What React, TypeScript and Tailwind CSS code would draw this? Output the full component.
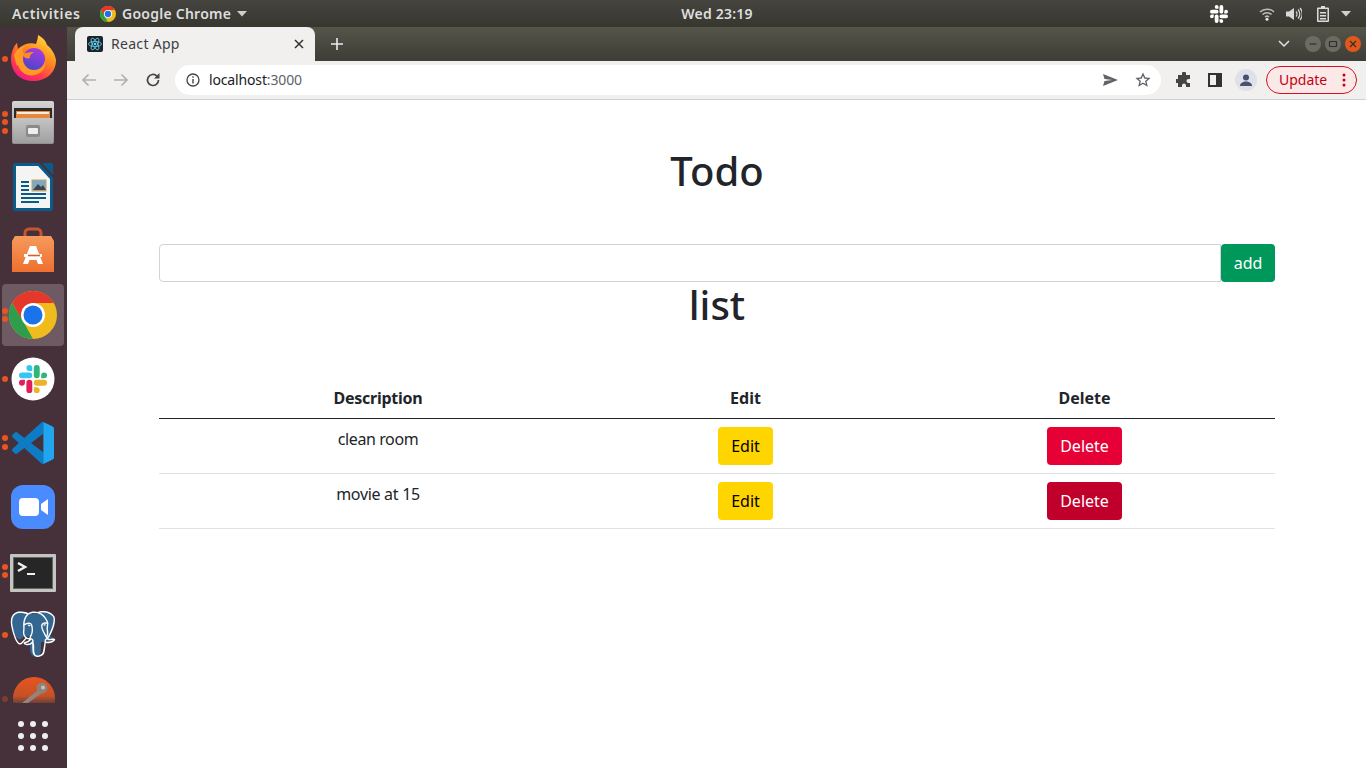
import React from "react";
import { SiPostgresql } from "react-icons/si";

const font = { fontFamily: '"Noto Sans", "Open Sans", sans-serif' };

function Slot({ dots = [], dim = false, active = false, children }: { dots?: number[]; dim?: boolean; active?: boolean; children: React.ReactNode }) {
  return (
    <div className="relative h-[64px] w-[67px] shrink-0">
      {active && <div className="absolute left-[2px] top-[1px] h-[62px] w-[62px] rounded-[4px] bg-[#6d5a62]" />}
      {dots.map((y) => (
        <span key={y} className={`absolute left-[2px] h-[6px] w-[6px] rounded-full ${dim ? "bg-[#7c3f2c]" : "bg-[#e95420]"}`} style={{ top: y - 3 }} />
      ))}
      <svg className="absolute left-0 top-0" width="67" height="64" viewBox="0 0 67 64">
        {children}
      </svg>
    </div>
  );
}

function Firefox() {
  return (
    <>
      <defs>
        <linearGradient id="ff1" x1="0.8" y1="0" x2="0.2" y2="1">
          <stop offset="0" stopColor="#ffe13a" />
          <stop offset="0.4" stopColor="#ff8a1f" />
          <stop offset="0.75" stopColor="#ff3750" />
          <stop offset="1" stopColor="#f0148c" />
        </linearGradient>
        <linearGradient id="ff2" x1="0.7" y1="0" x2="0.3" y2="1">
          <stop offset="0" stopColor="#a83be0" />
          <stop offset="1" stopColor="#4a46c8" />
        </linearGradient>
      </defs>
      <path d="M38 8c6 3 8 7 9 10 3 2 8 8 9 15 0 13-10 21-23 21S11 45 11 32c0-5 2-10 3-12 1-2 3-4 3-4l1 6c2-2 5-4 8-5 3-1 7-1 10 0 1-3 2-6 2-9z" fill="url(#ff1)" />
      <path d="M14 28c2-5 7-9 12-10-3 3-4 6-3 8 4-3 14-3 20 3 5 6 2 17-8 19-8 2-15-3-17-10-1 2-2 0-4-10z" fill="#ff9a22" />
      <circle cx="34" cy="32" r="11" fill="url(#ff2)" />
      <path d="M23 28c3-3 8-3 11-3-3 2-5 4-4 6-3 1-6 0-7-3z" fill="#ff8a1f" />
    </>
  );
}

function Files() {
  return (
    <>
      <defs>
        <linearGradient id="fl" x1="0" y1="0" x2="0" y2="1">
          <stop offset="0" stopColor="#d6d6d6" />
          <stop offset="1" stopColor="#8f8f8f" />
        </linearGradient>
        <linearGradient id="fl2" x1="0" y1="0" x2="0" y2="1">
          <stop offset="0" stopColor="#c4c4c4" />
          <stop offset="1" stopColor="#a0a0a0" />
        </linearGradient>
      </defs>
      <rect x="12" y="10" width="42" height="43" rx="2" fill="url(#fl)" />
      <rect x="14" y="17" width="38" height="11" fill="#2c2c2c" />
      <rect x="16" y="20" width="34" height="8" fill="#e8863a" />
      <rect x="17" y="21" width="32" height="2" fill="#f7ede0" />
      <rect x="13" y="27" width="40" height="25" fill="url(#fl2)" />
      <rect x="26" y="34" width="14" height="12" rx="2" fill="#8a8a8a" />
      <rect x="28" y="37" width="10" height="6" rx="1" fill="#eeeeee" />
    </>
  );
}

function Writer() {
  return (
    <>
      <path d="M13 10a2 2 0 0 1 2-2h24l14 15v31a2 2 0 0 1-2 2H15a2 2 0 0 1-2-2z" fill="#0b5a8c" />
      <path d="M42 8h9a2 2 0 0 1 2 2v10z" fill="#0b5a8c" />
      <path d="M16 11h22l12 13v29H16z" fill="#f4f4f2" />
      <rect x="32" y="25" width="14" height="11" fill="#7ba7c9" stroke="#c9a35a" />
      <path d="M33 35l5-6 3 3 2-2 3 5z" fill="#444" />
      <path d="M21 26h8v2h-8zM21 30h8v2h-8zM21 34h8v2h-8zM21 38h25v2H21zM21 42h25v2H21zM21 46h18v2H21z" fill="#0b5a8c" />
    </>
  );
}

function Store() {
  return (
    <>
      <defs>
        <linearGradient id="st" x1="0" y1="0" x2="0" y2="1">
          <stop offset="0" stopColor="#f59a5d" />
          <stop offset="1" stopColor="#ef6f2e" />
        </linearGradient>
      </defs>
      <path d="M25 20v-6a4 4 0 0 1 4-4h8a4 4 0 0 1 4 4v6" fill="none" stroke="#c9562a" strokeWidth="3" />
      <path d="M15 17h36l3 5v31H12V22z" fill="url(#st)" />
      <path d="M30 27h6l7 18h-5l-1.500-4h-7L28 45h-5z" fill="#fff" />
      <rect x="24" y="35" width="18" height="3" fill="#fff" />
      <rect x="28" y="35.700" width="12" height="1.600" fill="#e25c2a" />
    </>
  );
}

function ChromeIcon({ cx, cy, r }: { cx: number; cy: number; r: number }) {
  const k = r / 24;
  const p = (x: number, y: number) => `${cx + x * k} ${cy + y * k}`;
  return (
    <>
      <circle cx={cx} cy={cy} r={r} fill="#f0bb1c" />
      <path d={`M${p(-20.8, -12)}A${r} ${r} 0 0 1 ${p(20.8, -12)}L${p(0, -12)}Z`} fill="#e5382b" />
      <path d={`M${p(-20.8, -12)}L${p(-10, 6)}L${p(0, 24)}A${r} ${r} 0 0 1 ${p(-20.8, -12)}Z`} fill="#2f9e4c" />
      <path d={`M${p(-20.8, -12)}L${p(0, -12)}L${p(-10, 6)}Z`} fill="#e5382b" />
      <circle cx={cx} cy={cy} r={12 * k} fill="#fff" />
      <circle cx={cx} cy={cy} r={9.5 * k} fill="#1a73e8" />
    </>
  );
}

function SlackMark({ x, y, s, mono }: { x: number; y: number; s: number; mono?: string }) {
  return (
    <g transform={`translate(${x} ${y}) scale(${s})`}>
      <path fill={mono || "#e01e5a"} d="M5.042 15.165a2.528 2.528 0 0 1-2.52 2.523A2.528 2.528 0 0 1 0 15.165a2.527 2.527 0 0 1 2.522-2.52h2.52v2.52zM6.313 15.165a2.527 2.527 0 0 1 2.521-2.52 2.527 2.527 0 0 1 2.521 2.52v6.313A2.528 2.528 0 0 1 8.834 24a2.528 2.528 0 0 1-2.521-2.522v-6.313z" />
      <path fill={mono || "#36c5f0"} d="M8.834 5.042a2.528 2.528 0 0 1-2.521-2.52A2.528 2.528 0 0 1 8.834 0a2.528 2.528 0 0 1 2.521 2.522v2.52H8.834zM8.834 6.313a2.528 2.528 0 0 1 2.521 2.521 2.528 2.528 0 0 1-2.521 2.521H2.522A2.528 2.528 0 0 1 0 8.834a2.528 2.528 0 0 1 2.522-2.521h6.312z" />
      <path fill={mono || "#2eb67d"} d="M18.956 8.834a2.528 2.528 0 0 1 2.522-2.521A2.528 2.528 0 0 1 24 8.834a2.528 2.528 0 0 1-2.522 2.521h-2.522V8.834zM17.688 8.834a2.528 2.528 0 0 1-2.523 2.521 2.527 2.527 0 0 1-2.52-2.521V2.522A2.527 2.527 0 0 1 15.165 0a2.528 2.528 0 0 1 2.523 2.522v6.312z" />
      <path fill={mono || "#ecb22e"} d="M15.165 18.956a2.528 2.528 0 0 1 2.523 2.522A2.528 2.528 0 0 1 15.165 24a2.527 2.527 0 0 1-2.52-2.522v-2.522h2.52zM15.165 17.688a2.527 2.527 0 0 1-2.52-2.523 2.526 2.526 0 0 1 2.52-2.52h6.313A2.527 2.527 0 0 1 24 15.165a2.528 2.528 0 0 1-2.522 2.523h-6.313z" />
    </g>
  );
}

function VSCode() {
  return (
    <g transform="translate(12 11) scale(1.75)">
      <path fill="#0e7cc4" d="M23.15 2.587L18.21.21a1.494 1.494 0 0 0-1.705.29l-9.46 8.63-4.12-3.128a.999.999 0 0 0-1.276.057L.327 7.261A1 1 0 0 0 .326 8.74L3.899 12 .326 15.26a1 1 0 0 0 .001 1.479L1.65 17.94a.999.999 0 0 0 1.276.057l4.12-3.128 9.46 8.63a1.492 1.492 0 0 0 1.704.29l4.942-2.377A1.5 1.5 0 0 0 24 20.06V3.939a1.5 1.5 0 0 0-.85-1.352zm-5.146 14.861L10.826 12l7.178-5.448v10.896z" />
      <path fill="#22a4ee" d="M18 .12l5.15 2.467A1.5 1.5 0 0 1 24 3.939V20.06a1.5 1.5 0 0 1-.85 1.353L18 23.88z" />
    </g>
  );
}

function ZoomIcon() {
  return (
    <>
      <rect x="11" y="10" width="44" height="44" rx="12" fill="#4a8cff" />
      <rect x="19" y="23" width="20" height="18" rx="4" fill="#fff" />
      <path d="M41 29l7-5v16l-7-5z" fill="#fff" />
    </>
  );
}

function Terminal() {
  return (
    <>
      <rect x="10" y="15" width="46" height="38" rx="1" fill="#c4c4c0" />
      <rect x="13" y="18" width="40" height="32" fill="#666" />
      <rect x="14" y="19" width="38" height="30" fill="#262626" />
      <path d="M18 24l7 4-7 4" fill="none" stroke="#f0f0f0" strokeWidth="2.500" />
      <rect x="27" y="34" width="8" height="2" fill="#f0f0f0" />
    </>
  );
}

function Postgres() {
  return (
    <>
      <path d="M20 9c-7 0-9 5-9 9 0 7 3 14 6 17 2 2 4 2 6-1l3-1c1 0 3 1 4 1v12c0 5 3 8 6 8s5-3 5-8V39c3 0 6 0 8-1 3-1 5-2 5-3-1-1-3-1-4-2 2-4 5-9 5-14 0-7-4-10-10-10-3 0-5 1-6 2-3-1-5-1-8 0-3-2-7-3-12-3z" fill="#336791" />
      <SiPostgresql x={10} y={8} size={46} color="#ffffff" />
    </>
  );
}

function Last() {
  return (
    <>
      <defs>
        <linearGradient id="ls" x1="0" y1="0" x2="0" y2="1">
          <stop offset="0" stopColor="#e95420" />
          <stop offset="0.45" stopColor="#c65126" />
          <stop offset="0.62" stopColor="#6a4038" />
        </linearGradient>
      </defs>
      <circle cx="34" cy="31" r="21" fill="url(#ls)" />
      <circle cx="42" cy="21" r="5.500" fill="#8f8078" />
      <circle cx="43" cy="20.500" r="2" fill="#c8beb8" />
      <path d="M38 23L22 36h6l14-10z" fill="#94847c" />
    </>
  );
}

function Sidebar() {
  return (
    <div className="flex h-[741px] w-[67px] shrink-0 flex-col bg-[#46313b]">
      <div className="h-[676px] shrink-0 overflow-hidden">
        <Slot dots={[32]}><Firefox /></Slot>
        <Slot dots={[23, 31, 40]}><Files /></Slot>
        <Slot><Writer /></Slot>
        <Slot><Store /></Slot>
        <Slot active dots={[28, 36]}><ChromeIcon cx={33} cy={32} r={24} /></Slot>
        <Slot dots={[32]}>
          <circle cx="33" cy="32" r="21.500" fill="#fff" />
          <SlackMark x={19} y={18} s={1.17} />
        </Slot>
        <Slot dots={[27, 36]}><VSCode /></Slot>
        <Slot><ZoomIcon /></Slot>
        <Slot dots={[28, 36]}><Terminal /></Slot>
        <Slot dots={[32]}><Postgres /></Slot>
        <Slot dots={[32]} dim><Last /></Slot>
      </div>
      <div className="grid grid-cols-[6px_6px_6px] gap-[6px] pl-[18px] pt-[18px]">
        {Array.from({ length: 9 }).map((_, i) => (
          <span key={i} className="h-[6px] w-[6px] rounded-full bg-[#eeeeee]" />
        ))}
      </div>
    </div>
  );
}

function TopBar() {
  return (
    <div className="flex h-[27px] shrink-0 items-center bg-gradient-to-b from-[#45443f] to-[#37362f] text-[14px] font-semibold text-[#dedede]">
      <span className="ml-[12px] w-[88px] tracking-[0.6px]">Activities</span>
      <svg width="16" height="16" viewBox="0 0 16 16" className="mr-[6px]">
        <ChromeIcon cx={8} cy={8} r={8} />
      </svg>
      <span className="tracking-[0.25px]">Google Chrome</span>
      <svg width="10" height="6" viewBox="0 0 10 6" className="ml-[6px]"><path d="M0 0h10L5 5.500z" fill="#cfcfcf" /></svg>
      <span className="absolute left-[34px] w-full text-center tracking-[0.2px]">Wed 23:19</span>
      <div className="relative ml-auto flex items-center">
        <svg width="20" height="20" viewBox="0 0 20 20" className="mr-[30px]"><SlackMark x={1} y={1} s={0.75} mono="#ffffff" /></svg>
        <svg width="16" height="14" viewBox="0 0 16 14" className="mr-[11px]">
          <path d="M1 5a10 10 0 0 1 14 0M3.500 7.500a6.500 6.500 0 0 1 9 0M6 10a3 3 0 0 1 4 0" fill="none" stroke="#bdbdbd" strokeWidth="1.500" />
          <circle cx="8" cy="12.300" r="1.500" fill="#e8e8e8" />
        </svg>
        <svg width="16" height="14" viewBox="0 0 16 14" className="mr-[15px]">
          <path d="M0 4.500h3L8 1v12L3 9.500H0z" fill="#d8d8d8" />
          <path d="M10 4.500a3.500 3.500 0 0 1 0 5M12 2.500a6.500 6.500 0 0 1 0 9M14 1a9 9 0 0 1 0 12" fill="none" stroke="#d8d8d8" strokeWidth="1.200" />
        </svg>
        <svg width="12" height="16" viewBox="0 0 12 16" className="mr-[12px]">
          <path d="M4 0h4v1.500h3a1 1 0 0 1 1 1V15a1 1 0 0 1-1 1H1a1 1 0 0 1-1-1V2.500a1 1 0 0 1 1-1h3z" fill="#dcdcdc" />
          <rect x="1.500" y="3" width="9" height="11.500" fill="#45443f" />
          <path d="M3 6h6v1.400H3zM3 9h6v1.400H3zM3 12h6v1.400H3z" fill="#dcdcdc" />
        </svg>
        <svg width="10" height="6" viewBox="0 0 10 6" className="mr-[15px]"><path d="M0 0h10L5 5.500z" fill="#d0d0d0" /></svg>
      </div>
    </div>
  );
}

function WinBtn({ bg, children }: { bg: string; children: React.ReactNode }) {
  return (
    <div className={`flex h-[16px] w-[16px] items-center justify-center rounded-full ${bg}`}>
      <svg width="10" height="10" viewBox="0 0 10 10" fill="none" stroke="#2f2e2a" strokeWidth="1.200">{children}</svg>
    </div>
  );
}

function TabStrip() {
  return (
    <div className="flex h-[34px] shrink-0 items-end bg-gradient-to-b from-[#55554a] to-[#3e3d36]">
      <div className="ml-[8px] flex h-[34px] w-[240px] items-center rounded-t-[8px] bg-[#f1f0ef] pl-[12px] pr-[10px]">
        <svg width="16" height="16" viewBox="0 0 16 16">
          <rect width="16" height="16" rx="2" fill="#20232a" />
          <g fill="none" stroke="#61dafb" strokeWidth="0.800">
            <ellipse cx="8" cy="8" rx="6.500" ry="2.500" />
            <ellipse cx="8" cy="8" rx="6.500" ry="2.500" transform="rotate(60 8 8)" />
            <ellipse cx="8" cy="8" rx="6.500" ry="2.500" transform="rotate(120 8 8)" />
          </g>
          <circle cx="8" cy="8" r="1.300" fill="#61dafb" />
        </svg>
        <span className="ml-[8px] pb-[2px] text-[14px] tracking-[0.3px] text-[#3c4043]">React App</span>
        <svg width="10" height="10" viewBox="0 0 10 10" className="ml-auto mr-[1px]">
          <path d="M1 1l8 8M9 1L1 9" stroke="#303134" strokeWidth="1.500" />
        </svg>
      </div>
      <svg width="14" height="14" viewBox="0 0 14 14" className="mb-[10px] ml-[15px]">
        <path d="M7 1v12M1 7h12" stroke="#ececec" strokeWidth="1.600" />
      </svg>
      <div className="mb-[9px] ml-auto flex items-center gap-[4px] pr-[5px]">
        <svg width="12" height="8" viewBox="0 0 12 8" className="mr-[11px]"><path d="M1 1l5 5 5-5" fill="none" stroke="#e3e3e3" strokeWidth="1.500" /></svg>
        <WinBtn bg="bg-[#6c6b63]"><path d="M1.500 5h7" /></WinBtn>
        <WinBtn bg="bg-[#6c6b63]"><rect x="1.500" y="2.500" width="7" height="5" rx="0.500" /></WinBtn>
        <WinBtn bg="bg-[#e2571c]"><path d="M2 2l6 6M8 2L2 8" /></WinBtn>
      </div>
    </div>
  );
}

function Toolbar() {
  return (
    <div className="flex h-[39px] shrink-0 items-center border-b border-[#d0d0d0] bg-[#f1f0ef] pb-[1px]">
      <svg width="16" height="14" viewBox="0 0 16 14" className="ml-[14px]"><path d="M15 7H2M7.500 1.500L2 7l5.500 5.500" fill="none" stroke="#b0b0b0" strokeWidth="1.700" /></svg>
      <svg width="16" height="14" viewBox="0 0 16 14" className="ml-[16px]"><path d="M1 7h13M8.500 1.500L14 7l-5.500 5.500" fill="none" stroke="#b0b0b0" strokeWidth="1.700" /></svg>
      <svg width="16" height="16" viewBox="0 0 16 16" className="ml-[16px]">
        <path d="M13.500 8A5.500 5.500 0 1 1 11.900 4.100" fill="none" stroke="#444" strokeWidth="1.700" />
        <path d="M14.500 1v5.500H9z" fill="#444" />
      </svg>
      <div className="ml-[14px] flex h-[30px] w-[986px] items-center rounded-full bg-white pl-[11px] pr-[10px]">
        <svg width="14" height="14" viewBox="0 0 14 14">
          <circle cx="7" cy="7" r="6" fill="none" stroke="#444" strokeWidth="1.300" />
          <path d="M6.300 6h1.400v4.500H6.300zM6.300 3.300h1.400v1.400H6.300z" fill="#444" />
        </svg>
        <span className="ml-[9px] text-[14px] tracking-[-0.15px] text-[#202124]">localhost<span className="text-[#5f6368]">:3000</span></span>
        <svg width="16" height="12" viewBox="0 0 16 12" className="ml-auto mr-[16px]"><path d="M0 0l15 6-15 6 1.500-5L9 6 1.500 5z" fill="#5f6368" /></svg>
        <svg width="16" height="16" viewBox="0 0 24 24"><path d="M12 3l2.700 6 6.300.6-4.800 4.200 1.500 6.400L12 16.800 6.300 20.200l1.500-6.400L3 9.600 9.300 9z" fill="none" stroke="#5f6368" strokeWidth="2" /></svg>
      </div>
      <svg width="16" height="16" viewBox="0 0 16 16" className="ml-[15px]">
        <path d="M6 1.500a2 2 0 0 1 4 0V3h4v4h-1.500a2 2 0 0 0 0 4H14v4H10v-1.500a2 2 0 0 0-4 0V15H2v-4H.8a2 2 0 0 1 0-4H2V3h4z" fill="#444" />
      </svg>
      <svg width="14" height="14" viewBox="0 0 14 14" className="ml-[16px]">
        <rect x="1" y="1" width="12" height="12" fill="none" stroke="#333" strokeWidth="2" />
        <rect x="8" y="1" width="5" height="12" fill="#333" />
      </svg>
      <div className="ml-[13px] flex h-[22px] w-[22px] items-center justify-center rounded-full bg-[#dfe1e8]">
        <svg width="14" height="14" viewBox="0 0 14 14">
          <circle cx="7" cy="4.500" r="3" fill="#4a5070" />
          <path d="M1 13c0-3 3-4.500 6-4.500s6 1.500 6 4.500z" fill="#4a5070" />
        </svg>
      </div>
      <div className="ml-[9px] flex h-[28px] w-[91px] items-center rounded-full border border-[#d9101a] bg-[#fbe9e9] pl-[12px] text-[14px] text-[#c5000f]">
        Update
        <svg width="4" height="14" viewBox="0 0 4 14" className="ml-auto mr-[10px]">
          <circle cx="2" cy="2" r="1.500" fill="#c5000f" /><circle cx="2" cy="7" r="1.500" fill="#c5000f" /><circle cx="2" cy="12" r="1.500" fill="#c5000f" />
        </svg>
      </div>
    </div>
  );
}

const rows = [
  { text: "clean room", del: "bg-[#e60036]", track: "tracking-[-0.4px]" },
  { text: "movie at 15", del: "bg-[#c0002b]", track: "tracking-[-0.3px]" },
];

function Page() {
  return (
    <div className="flex-1 bg-white pl-[92px] pr-[91px] pt-[48px] text-[16px] text-[#212529]">
      <h1 className="mb-[50px] text-center text-[40px] font-medium leading-[46px]">Todo</h1>
      <div className="flex">
        <input className="h-[38px] flex-1 rounded-l-[4px] border border-[#ced4da] bg-white" />
        <button className="h-[38px] w-[54px] rounded-[4px] bg-[#00975a] text-white">add</button>
      </div>
      <h1 className="mb-[50px] text-center text-[40px] font-medium leading-[46px]">list</h1>
      <table className="w-full border-collapse">
        <thead>
          <tr className="border-b border-[#212529]">
            <th className="w-[438px] p-[8px] text-center font-bold leading-[24px] tracking-[-0.25px]">Description</th>
            <th className="w-[297px] p-[8px] text-center font-bold leading-[24px]">Edit</th>
            <th className="w-[381px] p-[8px] text-center font-bold leading-[24px]">Delete</th>
          </tr>
        </thead>
        <tbody>
          {rows.map((r) => (
            <tr key={r.text} className="border-b border-[#dee2e6]">
              <td className={`p-[8px] text-center align-top leading-[24px] ${r.track}`}>{r.text}</td>
              <td className="p-[8px] text-center">
                <button className="h-[38px] w-[55px] rounded-[4px] bg-[#ffd500] text-black">Edit</button>
              </td>
              <td className="p-[8px] text-center">
                <button className={`h-[38px] w-[75px] rounded-[4px] text-white ${r.del}`}>Delete</button>
              </td>
            </tr>
          ))}
        </tbody>
      </table>
    </div>
  );
}

export default function App() {
  return (
    <div className="relative flex h-[768px] w-[1366px] flex-col overflow-hidden bg-white" style={font}>
      <TopBar />
      <div className="flex flex-1 overflow-hidden">
        <Sidebar />
        <div className="flex flex-1 flex-col">
          <TabStrip />
          <Toolbar />
          <Page />
        </div>
      </div>
    </div>
  );
}
